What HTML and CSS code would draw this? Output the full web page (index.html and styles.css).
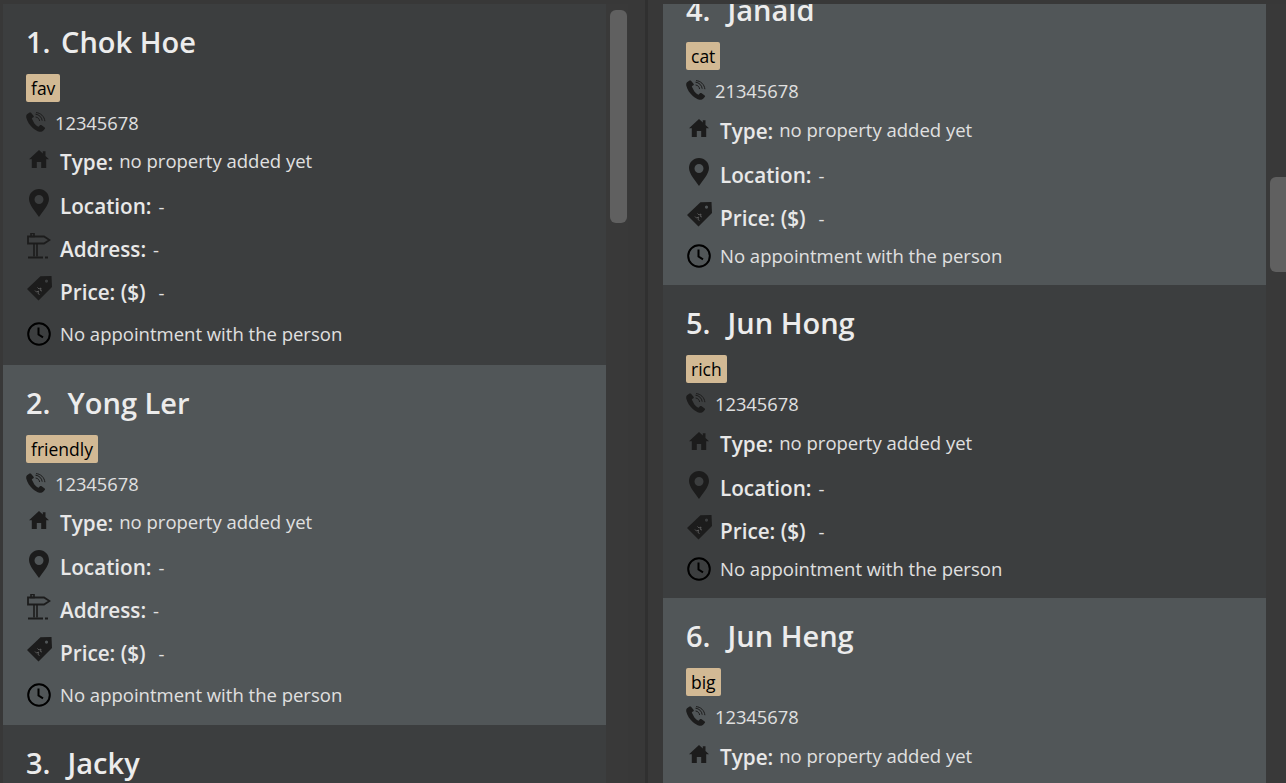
FILE: index.html
```html
<!DOCTYPE html>
<html lang="en">
<head>
    <meta charset="UTF-8">
    <title>Person list</title>
    <link rel="stylesheet" href="styles.css">
</head>
<body>
    <svg class="defs" width="0" height="0">
        <symbol id="i-phone" viewBox="0 0 20 20">
            <path d="M3.6 .6 1 2.2C.2 3 0 4.4.4 6c1 3.800 3.400 7.400 6.400 10 2 1.700 4.400 3.300 6.600 3.700 1.500.3 3-.2 4-1.200l1.500-1.700c.4-.5.3-1-.2-1.400l-3.400-2.300c-.5-.3-1-.2-1.400.2l-1.300 1.500c-1.500-.5-3-1.800-4.200-3.200C7.300 9.300 6.300 7.800 5.800 6.300l1.500-1C7.800 5 8 4.400 7.700 3.900L5.200.9C4.800.4 4.100.3 3.600.6Z" fill="#1c1c1c"/>
            <path d="M9.500 2.200c3.600.3 6.300 3 6.700 6.500M9.600 5c2.200.2 3.800 1.900 4 4M10 .6c4.600.3 8.300 3.700 8.900 8.600" fill="none" stroke="#1c1c1c" stroke-width="1"/>
        </symbol>
        <symbol id="i-home" viewBox="0 0 20 18">
            <path d="M10 0 0 9.300h2.800V18h5v-6h4.400v6h5V9.300H20L16.500 6V1.200h-2.700v2.300Z" fill="#1c1c1c"/>
        </symbol>
        <symbol id="i-pin" viewBox="0 0 20 28">
            <path fill-rule="evenodd" d="M10 0C4.300 0 0 4.400 0 10c0 6 6.500 12.500 10 18 3.500-5.500 10-12 10-18C20 4.400 15.700 0 10 0Zm0 6a4.500 4.500 0 1 1 0 9 4.500 4.500 0 0 1 0-9Z" fill="#1c1c1c"/>
        </symbol>
        <symbol id="i-sign" viewBox="0 0 24 26">
            <path d="M1 3.500h16l5.500 3.500L17 10.500H1Z" fill="none" stroke="#1c1c1c" stroke-width="1.800"/>
            <path d="M4 .5h3v3H4ZM7 10.500v13M10 10.500v13" fill="none" stroke="#1c1c1c" stroke-width="1.600"/>
            <path d="M1 24.500h15M18 24.500h3" stroke="#1c1c1c" stroke-width="1.800"/>
        </symbol>
        <symbol id="i-tag" viewBox="0 0 25 25">
            <path fill-rule="evenodd" d="M24.500 0 25 11 11.500 24.500 0 13 13.500.2ZM19.500 3.500a1.600 1.600 0 1 0 0 3.200 1.600 1.600 0 0 0 0-3.200Z" fill="#1c1c1c"/>
            <path d="m8 14.500 1.500 1.500 2-1-.5 2.500 1.500 1M10.500 11.500l1.500 1.500 2-1-.5 2.500 1.500.5" fill="none" stroke="#666" stroke-width=".8"/>
        </symbol>
        <symbol id="i-clock" viewBox="0 0 24 24">
            <circle cx="12" cy="12" r="10.800" fill="none" stroke="#000" stroke-width="2"/>
            <path d="M11.500 5.500v7l4.500 2.800" fill="none" stroke="#000" stroke-width="2"/>
        </symbol>
    </svg>

    <div class="split">
        <div class="pane pane-left">
            <div class="list">
                <div class="card">
                    <div class="name"><span class="num-one">1.</span>&nbsp;Chok Hoe</div>
                    <div class="tags"><span class="tag">fav</span></div>
                    <div class="phone"><svg class="ic-phone"><use href="#i-phone"/></svg>12345678</div>
                    <div class="row row-type"><span class="slot"><svg class="ic-home"><use href="#i-home"/></svg></span><b>Type:</b><span class="val val-type">no property added yet</span></div>
                    <div class="row row-loc"><span class="slot"><svg class="ic-pin"><use href="#i-pin"/></svg></span><b>Location:</b><span class="val">-</span></div>
                    <div class="row row-addr"><span class="slot"><svg class="ic-sign"><use href="#i-sign"/></svg></span><b>Address:</b><span class="val">-</span></div>
                    <div class="row row-price"><span class="slot"><svg class="ic-tag"><use href="#i-tag"/></svg></span><b>Price: ($)</b><span class="val val-price">-</span></div>
                    <div class="row row-appt"><span class="slot"><svg class="ic-clock"><use href="#i-clock"/></svg></span><span class="val-appt">No appointment with the person</span></div>
                </div>
                <div class="card card-alt">
                    <div class="name"><span class="num">2.</span>&nbsp; Yong Ler</div>
                    <div class="tags"><span class="tag">friendly</span></div>
                    <div class="phone"><svg class="ic-phone"><use href="#i-phone"/></svg>12345678</div>
                    <div class="row row-type"><span class="slot"><svg class="ic-home"><use href="#i-home"/></svg></span><b>Type:</b><span class="val val-type">no property added yet</span></div>
                    <div class="row row-loc"><span class="slot"><svg class="ic-pin"><use href="#i-pin"/></svg></span><b>Location:</b><span class="val">-</span></div>
                    <div class="row row-addr"><span class="slot"><svg class="ic-sign"><use href="#i-sign"/></svg></span><b>Address:</b><span class="val">-</span></div>
                    <div class="row row-price"><span class="slot"><svg class="ic-tag"><use href="#i-tag"/></svg></span><b>Price: ($)</b><span class="val val-price">-</span></div>
                    <div class="row row-appt"><span class="slot"><svg class="ic-clock"><use href="#i-clock"/></svg></span><span class="val-appt">No appointment with the person</span></div>
                </div>
                <div class="card">
                    <div class="name"><span class="num">3.</span>&nbsp; Jacky</div>
                </div>
            </div>
            <div class="scrollbar"><div class="thumb thumb-left"></div></div>
        </div>

        <div class="divider"></div>

        <div class="pane pane-right">
            <div class="list list-scrolled">
                <div class="card card-alt">
                    <div class="name"><span class="num">4.</span>&nbsp; Janald</div>
                    <div class="tags"><span class="tag">cat</span></div>
                    <div class="phone"><svg class="ic-phone"><use href="#i-phone"/></svg>21345678</div>
                    <div class="row row-type"><span class="slot"><svg class="ic-home"><use href="#i-home"/></svg></span><b>Type:</b><span class="val val-type">no property added yet</span></div>
                    <div class="row row-loc"><span class="slot"><svg class="ic-pin"><use href="#i-pin"/></svg></span><b>Location:</b><span class="val">-</span></div>
                    <div class="row row-price"><span class="slot"><svg class="ic-tag"><use href="#i-tag"/></svg></span><b>Price: ($)</b><span class="val val-price">-</span></div>
                    <div class="row row-appt"><span class="slot"><svg class="ic-clock"><use href="#i-clock"/></svg></span><span class="val-appt">No appointment with the person</span></div>
                </div>
                <div class="card">
                    <div class="name"><span class="num">5.</span>&nbsp; Jun Hong</div>
                    <div class="tags"><span class="tag">rich</span></div>
                    <div class="phone"><svg class="ic-phone"><use href="#i-phone"/></svg>12345678</div>
                    <div class="row row-type"><span class="slot"><svg class="ic-home"><use href="#i-home"/></svg></span><b>Type:</b><span class="val val-type">no property added yet</span></div>
                    <div class="row row-loc"><span class="slot"><svg class="ic-pin"><use href="#i-pin"/></svg></span><b>Location:</b><span class="val">-</span></div>
                    <div class="row row-price"><span class="slot"><svg class="ic-tag"><use href="#i-tag"/></svg></span><b>Price: ($)</b><span class="val val-price">-</span></div>
                    <div class="row row-appt"><span class="slot"><svg class="ic-clock"><use href="#i-clock"/></svg></span><span class="val-appt">No appointment with the person</span></div>
                </div>
                <div class="card card-alt">
                    <div class="name"><span class="num">6.</span>&nbsp; Jun Heng</div>
                    <div class="tags"><span class="tag">big</span></div>
                    <div class="phone"><svg class="ic-phone"><use href="#i-phone"/></svg>12345678</div>
                    <div class="row row-type"><span class="slot"><svg class="ic-home"><use href="#i-home"/></svg></span><b>Type:</b><span class="val val-type">no property added yet</span></div>
                </div>
            </div>
            <div class="scrollbar scrollbar-right"><div class="thumb thumb-right"></div></div>
        </div>
    </div>
</body>
</html>
```
FILE: styles.css
```css
html, body {
    height: 100%;
    margin: 0;
    overflow: hidden;
}
body {
    background-color: #333333;
    font-family: "Open Sans", "Noto Sans", sans-serif;
    color: #e4e4e4;
}
.defs {
    display: block;
    height: 0;
}
.split {
    display: flex;
    height: 783px;
    padding-top: 4px;
    box-sizing: border-box;
    background-color: #383838;
}
.pane {
    display: flex;
    height: 779px;
    overflow: hidden;
}
.pane-left {
    width: 625px;
    padding-left: 3px;
}
.pane-right {
    width: 623px;
}
.divider {
    width: 3px;
    margin: -4px 15px 0 17px;
    background-color: #303030;
}
.list {
    width: 603px;
    flex-shrink: 0;
}
.list-scrolled {
    margin-top: -32px;
}
.card {
    background-color: #3c3e3f;
    padding-left: 23px;
    height: 361px;
    box-sizing: border-box;
    overflow: hidden;
}
.card-alt {
    background-color: #515658;
    height: 360px;
}
.pane-right .card {
    height: 313px;
}
.pane-left .card:last-child,
.pane-right .card:last-child {
    height: 200px;
}
.name {
    font-size: 29px;
    font-weight: 600;
    line-height: 38px;
    padding-top: 19px;
    padding-bottom: 1px;
    color: #ececec;
    white-space: pre;
}
.num {
    margin-right: 2px;
}
.num-one {
    margin-right: 3px;
}
.tags {
    display: flex;
    margin-top: 12px;
}
.tag {
    background-color: #d2b994;
    color: #000;
    font-size: 17.5px;
    font-weight: 500;
    line-height: 28px;
    padding: 0 5px;
    border-radius: 2px;
}
.phone {
    display: flex;
    align-items: center;
    height: 24px;
    margin-top: 8px;
    font-size: 18.3px;
    color: #e0e0e0;
}
.ic-phone {
    width: 20px;
    height: 20px;
    margin-right: 9px;
}
.row {
    display: flex;
    align-items: center;
    font-size: 18.5px;
}
.row-type { height: 30px; margin-top: 13px; }
.row-loc { height: 40px; margin-top: 9px; }
.row-addr { height: 30px; margin-top: 8px; }
.row-price { height: 32px; margin-top: 12px; }
.row-appt { height: 30px; margin-top: 10px; }
.pane-right .row-type { margin-top: 14px; }
.pane-right .row-price { margin-top: 7px; }
.pane-right .row-appt { margin-top: 6px; }
.slot {
    display: flex;
    justify-content: center;
    width: 26px;
    margin-right: 8px;
    flex-shrink: 0;
}
.row b {
    font-size: 20.7px;
    font-weight: 600;
    color: #e8e8e8;
}
.val {
    margin-left: 7px;
    color: #e0e0e0;
}
.val-type {
    margin-left: 6px;
    margin-bottom: 4px;
}
.val-price {
    margin-left: 13px;
}
.val-appt {
    color: #e0e0e0;
}
.ic-home { width: 20px; height: 18px; margin-bottom: 6px; }
.ic-pin { width: 20px; height: 28px; margin-bottom: 7px; }
.ic-sign { width: 24px; height: 26px; margin-bottom: 7px; }
.ic-tag { width: 25px; height: 25px; margin-bottom: 7px; }
.ic-clock { width: 24px; height: 24px; margin-top: 2px; }
.scrollbar {
    width: 22px;
    flex-shrink: 0;
    background-color: #393939;
    padding: 6px 1px 0 4px;
    box-sizing: border-box;
}
.scrollbar-right {
    width: 20px;
    padding: 0 0 0 4px;
}
.thumb {
    background-color: #606060;
    border-radius: 6px;
}
.thumb-left {
    height: 213px;
}
.thumb-right {
    height: 95px;
    margin-top: 173px;
    border-radius: 6px 0 0 6px;
}
```
